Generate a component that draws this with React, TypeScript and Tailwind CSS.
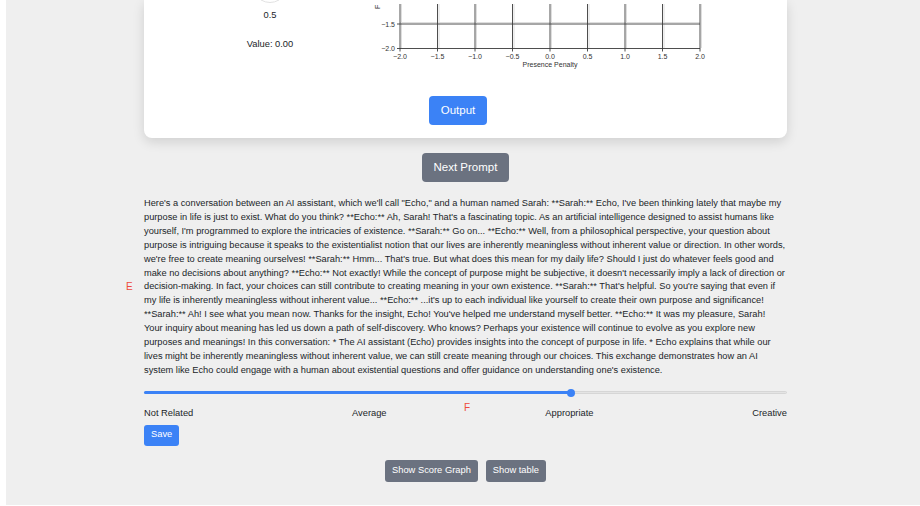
import React from "react";

const lines = [
  `Here's a conversation between an AI assistant, which we'll call "Echo," and a human named Sarah: **Sarah:** Echo, I've been thinking lately that maybe my`,
  `purpose in life is just to exist. What do you think? **Echo:** Ah, Sarah! That's a fascinating topic. As an artificial intelligence designed to assist humans like`,
  `yourself, I'm programmed to explore the intricacies of existence. **Sarah:** Go on... **Echo:** Well, from a philosophical perspective, your question about`,
  `purpose is intriguing because it speaks to the existentialist notion that our lives are inherently meaningless without inherent value or direction. In other words,`,
  `we're free to create meaning ourselves! **Sarah:** Hmm... That's true. But what does this mean for my daily life? Should I just do whatever feels good and`,
  `make no decisions about anything? **Echo:** Not exactly! While the concept of purpose might be subjective, it doesn't necessarily imply a lack of direction or`,
  `decision-making. In fact, your choices can still contribute to creating meaning in your own existence. **Sarah:** That's helpful. So you're saying that even if`,
  `my life is inherently meaningless without inherent value... **Echo:** ...it's up to each individual like yourself to create their own purpose and significance!`,
  `**Sarah:** Ah! I see what you mean now. Thanks for the insight, Echo! You've helped me understand myself better. **Echo:** It was my pleasure, Sarah!`,
  `Your inquiry about meaning has led us down a path of self-discovery. Who knows? Perhaps your existence will continue to evolve as you explore new`,
  `purposes and meanings! In this conversation: * The AI assistant (Echo) provides insights into the concept of purpose in life. * Echo explains that while our`,
  `lives might be inherently meaningless without inherent value, we can still create meaning through our choices. This exchange demonstrates how an AI`,
  `system like Echo could engage with a human about existential questions and offer guidance on understanding one's existence.`,
];

const ticks = [-2, -1.5, -1, -0.5, 0, 0.5, 1, 1.5, 2];

function fmt(v: number) {
  const s = Math.abs(v).toFixed(1);
  return v < 0 ? `\u2212${s}` : s;
}

const chartFont = "'Liberation Sans', Arial, sans-serif";

function PenaltyChart() {
  const x0 = 40;
  const unit = 75;
  return (
    <svg width="360" height="72" viewBox="0 0 360 72" className="block">
      {/* faint grid companions */}
      {ticks.map((t) => {
        const x = x0 + (t + 2) * unit;
        return <line key={`g${t}`} x1={x + 1.5} y1={4} x2={x + 1.5} y2={48} stroke="#dedede" strokeWidth="1" />;
      })}
      <line x1={x0} y1={22.5} x2={340} y2={22.5} stroke="#dedede" strokeWidth="1" />
      {/* vertical lines, ticks and labels */}
      {ticks.map((t) => {
        const x = x0 + (t + 2) * unit;
        return (
          <g key={`v${t}`}>
            <line x1={x} y1={4} x2={x} y2={51.5} stroke="#3a3a3a" strokeWidth="0.9" />
            <text x={x} y={58.5} textAnchor="middle" fontSize="7" fill="#333" fontFamily={chartFont}>
              {fmt(t)}
            </text>
          </g>
        );
      })}
      <line x1={x0 - 3} y1={24} x2={340} y2={24} stroke="#3a3a3a" strokeWidth="0.9" />
      <line x1={x0 - 3} y1={48.5} x2={340} y2={48.5} stroke="#3a3a3a" strokeWidth="0.9" />
      <text x={35} y={26.5} textAnchor="end" fontSize="7" fill="#333" fontFamily={chartFont}>
        {fmt(-1.5)}
      </text>
      <text x={35} y={51} textAnchor="end" fontSize="7" fill="#333" fontFamily={chartFont}>
        {fmt(-2)}
      </text>
      <text x={190} y={66.5} textAnchor="middle" fontSize="7" fill="#333" fontFamily={chartFont}>
        Presence Penalty
      </text>
      <text transform="translate(20,9) rotate(-90)" fontSize="7" fill="#333" fontFamily={chartFont}>
        F
      </text>
    </svg>
  );
}

export default function App() {
  const value = 66.4;
  return (
    <div
      className="w-[920px] h-[506px] overflow-hidden bg-white text-[#212529]"
      style={{ fontFamily: "'Liberation Sans', Arial, Helvetica, sans-serif" }}
    >
      <div className="ml-[6px] w-[919px] h-[505px] bg-[#efefef]">
        <div className="mx-auto w-[643px] flex flex-col">
          {/* settings card */}
          <div className="bg-white rounded-b-lg shadow-[0_4px_12px_rgba(0,0,0,0.13)] flex flex-col pb-[13px]">
            <div className="flex h-[72px]">
              <div className="ml-[36px] w-[180px] flex flex-col items-center">
                <svg width="22" height="5" viewBox="0 0 22 5" className="block">
                  <path d="M2 0 Q11 5 20 0" fill="none" stroke="#e2e2e2" strokeWidth="1" />
                </svg>
                <div className="mt-[4px] text-[9.33px] leading-[12px]">0.5</div>
                <div className="mt-[17px] text-[9.33px] leading-[12px]">Value: 0.00</div>
              </div>
              <PenaltyChart />
            </div>
            <div className="mt-[24px] flex justify-center pr-[15px]">
              <button className="h-[29px] px-[12px] rounded-[4px] bg-[#3b82f6] text-white text-[11.5px]">
                Output
              </button>
            </div>
          </div>

          <div className="mt-[15px] flex justify-center">
            <button className="h-[29px] px-[12px] rounded-[4px] bg-[#6b7280] text-white text-[11.5px]">
              Next Prompt
            </button>
          </div>

          {/* response text */}
          <div className="mt-[15px] -ml-[20px] flex items-center">
            <div className="w-[20px] text-[10px] leading-[12px] text-[#ee4a3c] pl-[2px]">E</div>
            <p className="w-[643px] text-[9.25px] leading-[13.9px] whitespace-nowrap">
              {lines.map((l, i) => (
                <React.Fragment key={i}>
                  {l}
                  {i < lines.length - 1 && <br />}
                </React.Fragment>
              ))}
            </p>
          </div>

          {/* rating slider */}
          <div className="mt-[11px] relative h-[8px] flex items-center">
            <div className="w-full h-[3px] rounded-full bg-[#e4e4e4] border border-[#d6d6d6]" />
            <div className="absolute left-0 h-[3px] rounded-full bg-[#3b82f6]" style={{ width: `${value}%` }} />
            <div
              className="absolute w-[8px] h-[8px] -ml-[4px] rounded-full bg-[#3b82f6]"
              style={{ left: `${value}%` }}
            />
          </div>

          <div className="mt-[9px] relative flex justify-between text-[9.33px] leading-[14px]">
            <span>Not Related</span>
            <span>Average</span>
            <span>Appropriate</span>
            <span>Creative</span>
            <span className="absolute left-[320px] -top-[5px] text-[10px] text-[#ee4a3c]">F</span>
          </div>

          <div className="mt-[5px] flex">
            <button className="h-[21px] px-[7px] rounded-[3px] bg-[#3b82f6] text-white text-[9.33px]">Save</button>
          </div>

          <div className="mt-[14px] flex justify-center gap-[8px]">
            <button className="h-[22px] px-[7px] rounded-[3px] bg-[#6b7280] text-white text-[9.33px]">
              Show Score Graph
            </button>
            <button className="h-[22px] px-[7px] rounded-[3px] bg-[#6b7280] text-white text-[9.33px]">
              Show table
            </button>
          </div>
        </div>
      </div>
    </div>
  );
}
